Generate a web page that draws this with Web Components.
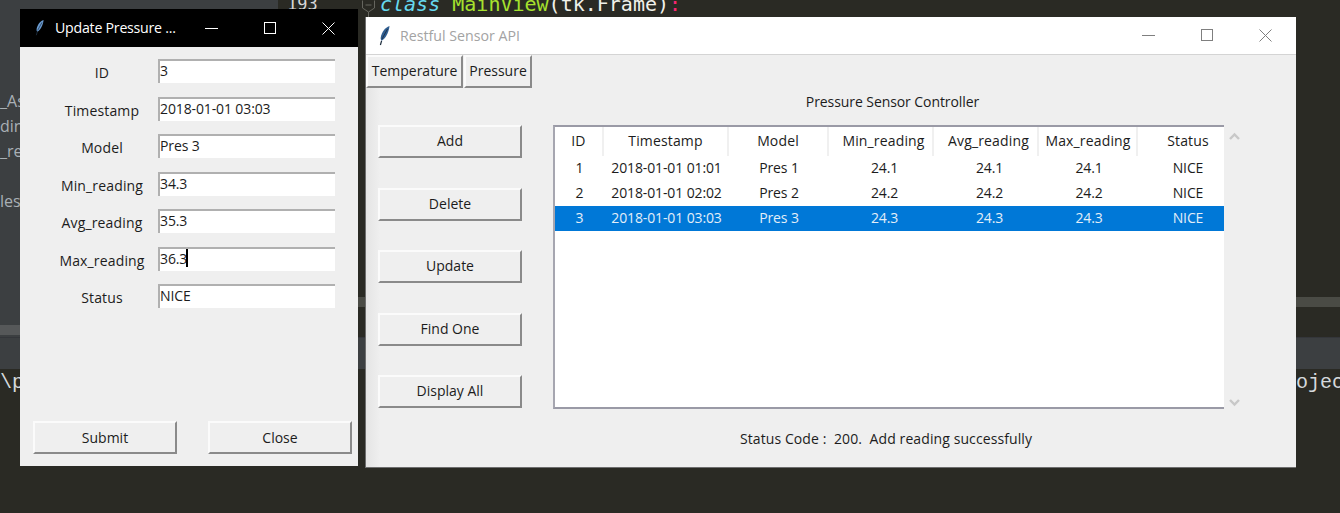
<!DOCTYPE html>
<html>
<head>
<meta charset="utf-8">
<title>Restful Sensor API</title>
<style>
    html, body { margin: 0; height: 100%; overflow: hidden; background: #2a2a24; }
    body { font: 14px "Open Sans", "Noto Sans", sans-serif; color: #1c1c1c; }
    .stage { position: relative; width: 1340px; height: 513px; overflow: hidden; }
    #dialog { position: absolute; left: 20px; top: 9px; width: 338px; height: 457px; }
    #main { position: absolute; left: 365px; top: 17px; width: 931px; height: 451px; }
</style>
</head>
<body>
<div class="stage">
    <ide-backdrop></ide-backdrop>

    <tk-window id="main" heading="Restful Sensor API">
        <pressure-view></pressure-view>
    </tk-window>

    <tk-window id="dialog" heading="Update Pressure ..." active>
        <update-form></update-form>
    </tk-window>
</div>

<script>
    // feather icon that tk puts on every window
    const FEATHER = `
        <svg class="feather" width="14" height="22" viewBox="0 0 14 22" aria-hidden="true">
            <path d="M11.5 1 C7 2.5 3.8 7 2.8 12 C2.5 13.8 2.8 15 3.6 15.8 C7.5 13.8 10.8 7.5 11.5 1 Z" fill="var(--feather, #2f5d90)"/>
            <path d="M3.6 15.8 L2.4 20" stroke="#1a2a3a" stroke-width="1.2" fill="none"/>
            <path d="M9.5 4 L4 14" stroke="#16263a" stroke-width=".8" fill="none"/>
        </svg>`;

    class IdeBackdrop extends HTMLElement {
        constructor() {
            super();
            this.attachShadow({ mode: 'open' });
        }

        connectedCallback() {
            this.shadowRoot.innerHTML = `
                <style>
                    :host {
                        display: grid;
                        grid-template-columns: 278px 1fr;
                        grid-template-rows: 337px 32px 1fr;
                        width: 1340px;
                        height: 513px;
                        background: #2a2a24;
                        overflow: hidden;
                    }
                    .tree {
                        background: #3c3f41;
                        color: #a9b0b5;
                        font: 16px "Open Sans", sans-serif;
                        display: flex;
                        flex-direction: column;
                    }
                    .tree span { height: 25px; line-height: 25px; }
                    .tree .first { margin-top: 89px; }
                    .tree .gap { margin-top: 25px; }
                    .thumb {
                        margin-top: auto;
                        margin-bottom: 2px;
                        height: 10px;
                        background: #565859;
                    }
                    .editor {
                        display: flex;
                        flex-direction: column;
                        overflow: hidden;
                        font: 20px "DejaVu Sans Mono", "Liberation Mono", monospace;
                    }
                    .code {
                        display: flex;
                        height: 17px;
                        line-height: 9px;
                        white-space: pre;
                        color: #f1f1ea;
                    }
                    .gutter {
                        width: 102px;
                        padding: 0 5px 0 9px;
                        box-sizing: border-box;
                        display: flex;
                        justify-content: space-between;
                        color: #d8d8d8;
                        font-size: 17px;
                    }
                    .kw { color: #66d9ef; font-style: italic; }
                    .cl { color: #a6e22e; }
                    .pk { color: #f92672; }
                    .hbar { margin-top: 280px; height: 10px; background: #4a4b45; }
                    .tools { grid-column: 1 / 3; background: #3c3f41; border-top: 1px solid #34363a; }
                    .term {
                        grid-column: 1 / 3;
                        display: flex;
                        justify-content: space-between;
                        margin-right: -4px;
                        padding-top: 2px;
                        height: 28px;
                        line-height: 24px;
                        font: 20px "Liberation Mono", monospace;
                        color: #d5d9dc;
                        white-space: pre;
                    }
                    .term .mid { color: #7ba4e0; margin-left: 320px; }
                </style>
                <div class="tree">
                    <span class="first">_As</span>
                    <span>din</span>
                    <span>_rea</span>
                    <span class="gap">les</span>
                    <div class="thumb"></div>
                </div>
                <div class="editor">
                    <div class="code">
                        <div class="gutter"><span>193</span><svg width="13" height="17" fill="none" stroke="#66665f"><path d="M.5 .5V8L6.5 12L12.5 8V.5M3.5 5H9.5M6.5 12V17"/></svg></div>
                        <div><span class="kw">class</span> <span class="cl">MainView</span>(tk.Frame)<span class="pk">:</span></div>
                    </div>
                    <div class="hbar"></div>
                </div>
                <div class="tools"></div>
                <div class="term"><span>\\p</span><span class="mid">F</span><span>ojec</span></div>
            `;
        }
    }

    class TkWindow extends HTMLElement {
        constructor() {
            super();
            this.attachShadow({ mode: 'open' });
        }

        connectedCallback() {
            const heading = this.getAttribute('heading') || '';
            const active = this.hasAttribute('active');
            this.shadowRoot.innerHTML = `
                <style>
                    :host {
                        display: flex;
                        flex-direction: column;
                        box-sizing: border-box;
                        background: #efefef;
                        border: ${active ? '0' : '1px solid #6e6e6e'};
                        border-top: 0;
                        border-right: 0;
                    }
                    .bar {
                        flex: none;
                        display: flex;
                        align-items: center;
                        height: 38px;
                        box-sizing: border-box;
                        background: ${active ? '#000' : '#fff'};
                        color: ${active ? '#fff' : '#a3a3a3'};
                        border-bottom: ${active ? '0' : '1px solid #d4d4d4'};
                        padding-left: ${active ? 13 : 12}px;
                        font: 14.2px "Open Sans", sans-serif;
                        letter-spacing: ${active ? '-.25px' : '0'};
                    }
                    .feather { flex: none; ${active ? '--feather:#6a9bd0; transform: scale(.8);' : ''} }
                    .name { margin-left: 8px; flex: 1; white-space: nowrap; ${active ? 'padding-bottom: 2px;' : ''} }
                    .ctl {
                        flex: none;
                        width: 58.5px;
                        height: 100%;
                        display: flex;
                        align-items: center;
                        justify-content: center;
                    }
                    .ctl svg { stroke: ${active ? '#fff' : '#7f7f7f'}; fill: none; }
                    .ctls { display: flex; height: 100%; margin-right: ${active ? 0 : 1}px; }
                    .body { flex: 1; min-height: 0; display: flex; flex-direction: column; }
                </style>
                <div class="bar">
                    ${FEATHER}
                    <span class="name">${heading}</span>
                    <div class="ctls">
                        <div class="ctl"><svg width="13" height="13"><path d="M0 6.5H13"/></svg></div>
                        <div class="ctl"><svg width="13" height="13"><rect x=".5" y=".5" width="11" height="11"/></svg></div>
                        <div class="ctl"><svg width="13" height="13"><path d="M.5 .5L12.5 12.5M12.5 .5L.5 12.5"/></svg></div>
                    </div>
                </div>
                <div class="body"><slot></slot></div>
            `;
        }
    }

    class TkButton extends HTMLElement {
        constructor() {
            super();
            this.attachShadow({ mode: 'open' });
        }

        connectedCallback() {
            this.shadowRoot.innerHTML = `
                <style>
                    :host {
                        display: flex;
                        align-items: center;
                        justify-content: center;
                        box-sizing: border-box;
                        background: #efefef;
                        border-style: solid;
                        border-width: 2px;
                        border-color: #fbfbfb #8a8a8a #8a8a8a #fbfbfb;
                        padding-bottom: 2px;
                        white-space: nowrap;
                        color: #1c1c1c;
                    }
                </style>
                <slot></slot>
            `;
        }
    }

    class TkEntry extends HTMLElement {
        constructor() {
            super();
            this.attachShadow({ mode: 'open' });
        }

        connectedCallback() {
            const caret = this.hasAttribute('caret');
            this.shadowRoot.innerHTML = `
                <style>
                    :host {
                        display: flex;
                        align-items: center;
                        box-sizing: border-box;
                        height: 24px;
                        background: #fff;
                        border-top: 2px solid #b0b0b0;
                        border-left: 2px solid #b0b0b0;
                        padding: 0 0 3px 0;
                        letter-spacing: -.12px;
                        color: #1c1c1c;
                    }
                    .caret { width: 2px; height: 18px; background: #000; margin-left: -1px; }
                </style>
                <slot></slot>${caret ? '<span class="caret"></span>' : ''}
            `;
        }
    }

    class UpdateForm extends HTMLElement {
        constructor() {
            super();
            this.attachShadow({ mode: 'open' });
        }

        connectedCallback() {
            const rows = [
                ['ID', '3'],
                ['Timestamp', '2018-01-01 03:03'],
                ['Model', 'Pres 3'],
                ['Min_reading', '34.3'],
                ['Avg_reading', '35.3'],
                ['Max_reading', '36.3', true],
                ['Status', 'NICE']
            ];
            this.shadowRoot.innerHTML = `
                <style>
                    :host {
                        flex: 1;
                        display: flex;
                        flex-direction: column;
                        justify-content: space-between;
                        box-sizing: border-box;
                        padding: 12px 6px 12px 13px;
                    }
                    .fields {
                        display: grid;
                        grid-template-columns: 112px 177px;
                        grid-auto-rows: 24px;
                        row-gap: 13.5px;
                        padding-left: 13px;
                    }
                    label { text-align: center; line-height: 28px; white-space: nowrap; letter-spacing: .15px; }
                    .actions { display: flex; justify-content: space-between; }
                    tk-button { width: 144px; height: 33px; padding-bottom: 0; }
                </style>
                <div class="fields">
                    ${rows.map(r => `
                        <label>${r[0]}</label>
                        <tk-entry ${r[2] ? 'caret' : ''}>${r[1]}</tk-entry>
                    `).join('')}
                </div>
                <div class="actions">
                    <tk-button>Submit</tk-button>
                    <tk-button>Close</tk-button>
                </div>
            `;
        }
    }

    class SensorTable extends HTMLElement {
        constructor() {
            super();
            this.attachShadow({ mode: 'open' });
        }

        connectedCallback() {
            const heads = ['ID', 'Timestamp', 'Model', 'Min_reading', 'Avg_reading', 'Max_reading', 'Status'];
            const rows = [
                ['1', '2018-01-01 01:01', 'Pres 1', '24.1', '24.1', '24.1', 'NICE'],
                ['2', '2018-01-01 02:02', 'Pres 2', '24.2', '24.2', '24.2', 'NICE'],
                ['3', '2018-01-01 03:03', 'Pres 3', '24.3', '24.3', '24.3', 'NICE']
            ];
            const cells = r => r.map(c => `<span>${c}</span>`).join('');
            this.shadowRoot.innerHTML = `
                <style>
                    :host {
                        display: block;
                        box-sizing: border-box;
                        background: #fff;
                        border-top: 2px solid #9a9aa6;
                        border-left: 2px solid #a6a6b0;
                        border-bottom: 2px solid #9a9aa6;
                        overflow: hidden;
                    }
                    .row {
                        display: grid;
                        grid-template-columns: 49px 125px 100px 105px 105px 99px 86px;
                        height: 25px;
                        line-height: 23px;
                        text-align: center;
                        white-space: nowrap;
                        letter-spacing: -.12px;
                    }
                    .row span:nth-child(4) { padding-left: 6px; }
                    .row span:nth-child(5) { padding-left: 6px; }
                    .row span:nth-child(6) { padding-left: 1px; }
                    .row span:nth-child(7) { padding-left: 14px; }
                    .head { height: 29px; line-height: 27px; letter-spacing: .15px; }
                    .head span { border-right: 2px solid #f0f0f0; box-sizing: border-box; }
                    .head span:nth-child(7) { border-right: 0; }
                    .sel { background: #0078d7; color: #e3eef8; }
                </style>
                <div class="row head">${cells(heads)}</div>
                ${rows.map((r, i) => `<div class="row ${i === 2 ? 'sel' : ''}">${cells(r)}</div>`).join('')}
            `;
        }
    }

    class PressureView extends HTMLElement {
        constructor() {
            super();
            this.attachShadow({ mode: 'open' });
        }

        connectedCallback() {
            const actions = ['Add', 'Delete', 'Update', 'Find One', 'Display All'];
            this.shadowRoot.innerHTML = `
                <style>
                    :host {
                        flex: 1;
                        display: flex;
                        flex-direction: column;
                        background: linear-gradient(90deg, #e4e4e4, #efefef 14px);
                    }
                    .tabs { display: flex; gap: 1px; height: 33px; }
                    .tab-a { width: 97px; }
                    .tab-b { width: 68px; }
                    h1 {
                        margin: 0 0 0 123px;
                        box-sizing: border-box;
                        height: 37px;
                        padding-bottom: 10px;
                        font: inherit;
                        letter-spacing: -.08px;
                        display: flex;
                        justify-content: center;
                        align-items: center;
                    }
                    .content { display: flex; padding-left: 12px; }
                    .side {
                        width: 144px;
                        display: flex;
                        flex-direction: column;
                        gap: 29.5px;
                    }
                    .side tk-button { height: 33px; }
                    sensor-table { width: 671px; height: 284px; margin-left: 31px; }
                    .scroll {
                        width: 20px;
                        display: flex;
                        flex-direction: column;
                        justify-content: space-between;
                        align-items: center;
                        padding: 7px 0 2px;
                        box-sizing: border-box;
                    }
                    .foot { text-align: center; margin: 18px 0 0 110px; line-height: 24px; letter-spacing: .1px; }
                </style>
                <div class="tabs">
                    <tk-button class="tab-a">Temperature</tk-button>
                    <tk-button class="tab-b">Pressure</tk-button>
                </div>
                <h1>Pressure Sensor Controller</h1>
                <div class="content">
                    <div class="side">
                        ${actions.map(a => `<tk-button>${a}</tk-button>`).join('')}
                    </div>
                    <sensor-table></sensor-table>
                    <div class="scroll">
                        <svg width="11" height="8" fill="none" stroke="#c8c8c8" stroke-width="2.4"><path d="M1 7L5.5 2.5L10 7"/></svg>
                        <svg width="11" height="8" fill="none" stroke="#c8c8c8" stroke-width="2.4"><path d="M1 1L5.5 5.5L10 1"/></svg>
                    </div>
                </div>
                <div class="foot">Status Code :&nbsp; 200.&nbsp; Add reading successfully</div>
            `;
        }
    }

    customElements.define('ide-backdrop', IdeBackdrop);
    customElements.define('tk-window', TkWindow);
    customElements.define('tk-button', TkButton);
    customElements.define('tk-entry', TkEntry);
    customElements.define('update-form', UpdateForm);
    customElements.define('sensor-table', SensorTable);
    customElements.define('pressure-view', PressureView);
</script>
</body>
</html>
